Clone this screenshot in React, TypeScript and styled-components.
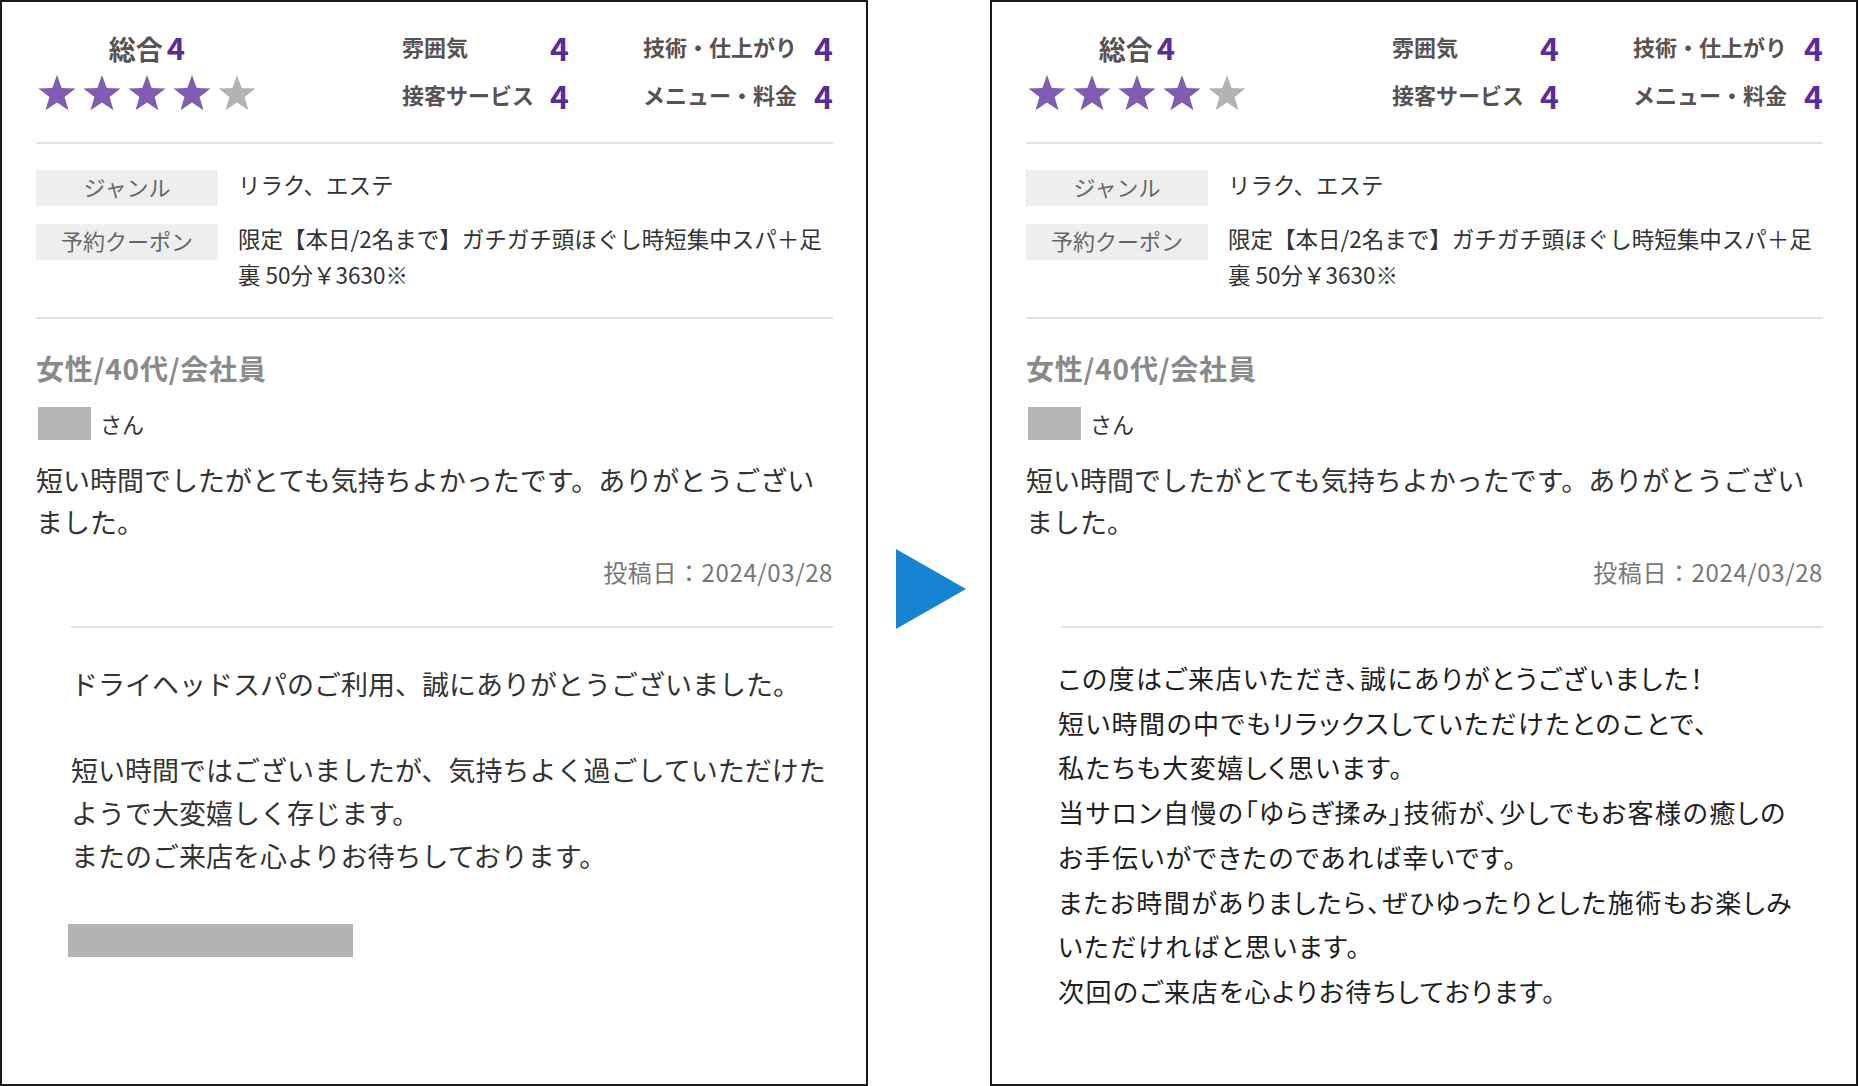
import React from "react";
import styled, { createGlobalStyle } from "styled-components";

const GlobalStyle = createGlobalStyle`
  html, body {
    margin: 0;
    padding: 0;
    background: #ffffff;
  }
  body {
    font-family: "Noto Sans CJK JP", "Noto Sans", sans-serif;
    color: #333333;
    width: 1859px;
    height: 1086px;
    overflow: hidden;
  }
  * { box-sizing: border-box; }
`;

const Page = styled.main`
  display: flex;
  align-items: stretch;
  width: 1859px;
  height: 1086px;
`;

const Panel = styled.section`
  width: 868px;
  height: 1086px;
  flex-shrink: 0;
  border: 2px solid #1a1a1a;
  padding: 25px 33px 0 34px;
  display: flex;
  flex-direction: column;
  background: #ffffff;
`;

const ArrowColumn = styled.div`
  width: 122px;
  flex-shrink: 0;
  display: flex;
  justify-content: center;
  padding-top: 549px;
  padding-left: 4px;
`;

const ScoreHeader = styled.div`
  display: flex;
  align-items: flex-start;
`;

const Overall = styled.div`
  width: 218px;
  margin-left: 2px;
  display: flex;
  flex-direction: column;
  align-items: center;
`;

const OverallTitle = styled.div`
  margin-top: 2px;
  height: 39px;
  font-size: 27px;
  font-weight: 700;
  line-height: 36px;
  color: #5a5151;
  display: flex;
  align-items: baseline;
`;

const OverallValue = styled.span`
  margin-left: 4px;
  font-size: 31px;
  font-weight: 700;
  color: #5b2c97;
`;

const Stars = styled.div`
  margin-top: 6px;
  display: flex;
  gap: 7px;
`;

const ScoreGrid = styled.div`
  margin-left: auto;
  display: grid;
  grid-template-columns: 167px 190px;
  column-gap: 74px;
  row-gap: 8px;
`;

const ScoreItem = styled.div`
  display: flex;
  justify-content: space-between;
  align-items: center;
  height: 40px;
`;

const ScoreLabel = styled.span`
  font-size: 22px;
  font-weight: 700;
  color: #5a5151;
  white-space: nowrap;
  margin-top: -2px;
`;

const ScoreValue = styled.span`
  font-size: 32px;
  font-weight: 700;
  line-height: 40px;
  color: #5b2c97;
`;

const Divider = styled.hr<{ $top: number; $indent?: number }>`
  border: none;
  height: 2px;
  background: #e2e2e2;
  margin: ${(p) => p.$top}px 0 0 ${(p) => p.$indent ?? 0}px;
  width: auto;
`;

const InfoTable = styled.div`
  margin-top: 26px;
  display: flex;
  flex-direction: column;
  gap: 18px;
`;

const InfoRow = styled.div`
  display: flex;
  align-items: flex-start;
  gap: 20px;
`;

const InfoLabel = styled.div`
  width: 182px;
  height: 36px;
  flex-shrink: 0;
  background: #eeeeee;
  color: #666666;
  font-size: 22px;
  line-height: 32px;
  text-align: center;
`;

const InfoValue = styled.div`
  margin-top: -4px;
  font-size: 22.5px;
  line-height: 36px;
  color: #333333;
  white-space: pre;
`;

const ReviewerMeta = styled.div`
  margin-top: 31px;
  font-size: 28px;
  font-weight: 700;
  line-height: 36px;
  color: #8a8a8a;
  letter-spacing: 0.8px;
`;

const NameRow = styled.div`
  margin-top: 21px;
  display: flex;
  align-items: center;
  gap: 9px;
  padding-left: 2px;
`;

const NameMask = styled.span`
  width: 53px;
  height: 33px;
  background: #b5b5b5;
`;

const NameSuffix = styled.span`
  font-size: 22px;
  line-height: 33px;
  color: #333333;
`;

const Comment = styled.p`
  margin: 19px 0 0;
  font-size: 27px;
  line-height: 42px;
  color: #333333;
  white-space: pre-line;
`;

const PostDate = styled.div`
  margin-top: 14px;
  text-align: right;
  font-size: 24px;
  line-height: 30px;
  color: #777777;
  letter-spacing: 0.6px;
`;

const ReplyText = styled.p<{ $variant: "original" | "revised" }>`
  margin: ${(p) => (p.$variant === "original" ? "34px 0 0 35px" : "28px 0 0 32px")};
  font-size: ${(p) => (p.$variant === "original" ? "27px" : "26px")};
  line-height: ${(p) => (p.$variant === "original" ? "43px" : "44.7px")};
  color: ${(p) => (p.$variant === "original" ? "#333333" : "#1e1e1e")};
  font-feature-settings: ${(p) => (p.$variant === "original" ? "normal" : '"palt" 1')};
  letter-spacing: ${(p) => (p.$variant === "original" ? "0" : "1.5px")};
  white-space: pre;
`;

const SignatureMask = styled.div`
  margin: 47px 0 0 32px;
  width: 285px;
  height: 33px;
  background: #b3b3b3;
`;

const StarIcon = ({ filled }: { filled: boolean }) => (
  <svg width="38" height="37" viewBox="0 0 38 37" aria-hidden="true">
    <polygon
      points="19,1 23.7,14.03 37.55,14.47 26.61,22.97 30.46,36.28 19,28.5 7.54,36.28 11.39,22.97 0.45,14.47 14.3,14.03"
      fill={filled ? "#7f5db2" : "#b3b3b3"}
    />
  </svg>
);

const ArrowIcon = () => (
  <svg width="70" height="80" viewBox="0 0 70 80" aria-hidden="true">
    <polygon points="0,0 70,40 0,80" fill="#1784d3" />
  </svg>
);

const scores = [
  { label: "雰囲気", value: 4 },
  { label: "技術・仕上がり", value: 4 },
  { label: "接客サービス", value: 4 },
  { label: "メニュー・料金", value: 4 },
];

const ReviewCard = ({ children }: { children: React.ReactNode }) => (
  <Panel>
    <ScoreHeader>
      <Overall>
        <OverallTitle>
          総合<OverallValue>4</OverallValue>
        </OverallTitle>
        <Stars>
          {[0, 1, 2, 3, 4].map((i) => (
            <StarIcon key={i} filled={i < 4} />
          ))}
        </Stars>
      </Overall>
      <ScoreGrid>
        {scores.map((s) => (
          <ScoreItem key={s.label}>
            <ScoreLabel>{s.label}</ScoreLabel>
            <ScoreValue>{s.value}</ScoreValue>
          </ScoreItem>
        ))}
      </ScoreGrid>
    </ScoreHeader>
    <Divider $top={27} />
    <InfoTable>
      <InfoRow>
        <InfoLabel>ジャンル</InfoLabel>
        <InfoValue>リラク、エステ</InfoValue>
      </InfoRow>
      <InfoRow>
        <InfoLabel>予約クーポン</InfoLabel>
        <InfoValue>{"限定【本日/2名まで】ガチガチ頭ほぐし時短集中スパ＋足\n裏 50分￥3630※"}</InfoValue>
      </InfoRow>
    </InfoTable>
    <Divider $top={25} />
    <ReviewerMeta>女性/40代/会社員</ReviewerMeta>
    <NameRow>
      <NameMask />
      <NameSuffix>さん</NameSuffix>
    </NameRow>
    <Comment>{"短い時間でしたがとても気持ちよかったです。ありがとうござい\nました。"}</Comment>
    <PostDate>投稿日：2024/03/28</PostDate>
    <Divider $top={39} $indent={35} />
    {children}
  </Panel>
);

export default function App() {
  return (
    <>
      <GlobalStyle />
      <Page>
        <ReviewCard>
          <ReplyText $variant="original">
            {"ドライヘッドスパのご利用、誠にありがとうございました。\n\n短い時間ではございましたが、気持ちよく過ごしていただけた\nようで大変嬉しく存じます。\nまたのご来店を心よりお待ちしております。"}
          </ReplyText>
          <SignatureMask />
        </ReviewCard>
        <ArrowColumn>
          <ArrowIcon />
        </ArrowColumn>
        <ReviewCard>
          <ReplyText $variant="revised">
            {"この度はご来店いただき、誠にありがとうございました！\n短い時間の中でもリラックスしていただけたとのことで、\n私たちも大変嬉しく思います。\n当サロン自慢の「ゆらぎ揉み」技術が、少しでもお客様の癒しの\nお手伝いができたのであれば幸いです。\nまたお時間がありましたら、ぜひゆったりとした施術もお楽しみ\nいただければと思います。\n次回のご来店を心よりお待ちしております。"}
          </ReplyText>
        </ReviewCard>
      </Page>
    </>
  );
}
